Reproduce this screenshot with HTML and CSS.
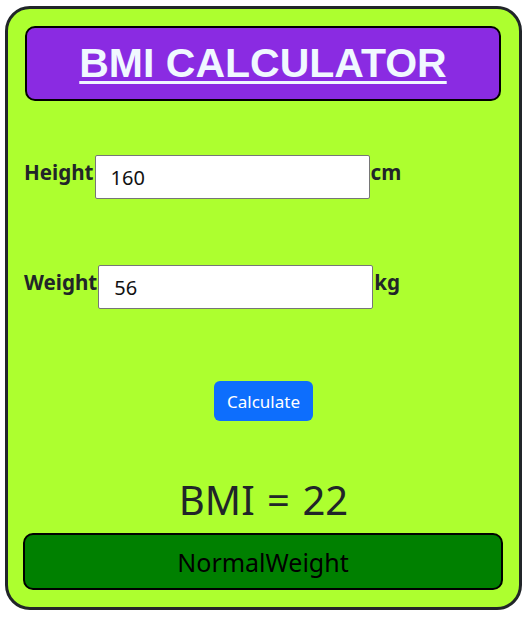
FILE: index.html
```html
<!DOCTYPE html>
<html lang="en">
<head>
<meta charset="utf-8">
<title>BMI Calculator</title>
<link rel="stylesheet" href="styles.css">
</head>
<body>
<div class="card">
  <div class="title-box">
    <h1 class="title">BMI CALCULATOR</h1>
  </div>
  <div class="field field-height">
    <label class="label" for="h">Height</label>
    <input class="input" id="h" type="text" value="160">
    <span class="unit">cm</span>
  </div>
  <div class="field field-weight">
    <label class="label" for="w">Weight</label>
    <input class="input" id="w" type="text" value="56">
    <span class="unit">kg</span>
  </div>
  <div class="actions">
    <button class="btn" type="button">Calculate</button>
  </div>
  <h2 class="bmi">BMI = 22</h2>
  <div class="result">NormalWeight</div>
</div>
</body>
</html>
```

FILE: styles.css
```css
* { box-sizing: border-box; }

body {
  margin: 0;
  background: #ffffff;
  font-family: "Noto Sans", "Open Sans", sans-serif;
  color: #212529;
}

.card {
  margin: 6px 0 0 5px;
  width: 517px;
  height: 604px;
  border: 3px solid #212529;
  border-radius: 25px;
  background: #adff2f;
  display: flex;
  flex-direction: column;
}

.title-box {
  margin: 17px 18px 0 17px;
  height: 75px;
  border: 2px solid #000;
  border-radius: 10px;
  background: #8a2be2;
  display: flex;
  align-items: center;
  justify-content: center;
}

.title {
  margin: 0;
  font-family: "Liberation Sans", Arial, sans-serif;
  font-weight: 700;
  font-size: 41px;
  color: #f0f8ff;
  text-decoration: underline;
  text-decoration-thickness: 3px;
  text-underline-offset: 4px;
}

.field {
  display: flex;
  align-items: flex-start;
  margin-left: 16px;
}

.field-height { margin-top: 54px; }
.field-weight { margin-top: 66px; }

.label,
.unit {
  font-size: 20.6px;
  font-weight: 700;
  line-height: 24px;
  padding-top: 5px;
  color: #212529;
}

.input {
  width: 275px;
  height: 44px;
  border: 1px solid #767676;
  border-radius: 2px;
  padding: 0 15px;
  font-family: "Noto Sans", "Open Sans", sans-serif;
  font-size: 20px;
  color: #111;
  background: #fff;
  margin: 0 1px 0 1px;
}

.actions {
  display: flex;
  justify-content: center;
  margin-top: 72px;
}

.btn {
  width: 99px;
  height: 40px;
  border: 0;
  border-radius: 6px;
  background: #0d6efd;
  color: #fff;
  font-family: "Noto Sans", "Open Sans", sans-serif;
  font-size: 17px;
  padding: 0;
}

.bmi {
  margin: 55px 0 0 0;
  text-align: center;
  font-size: 40px;
  font-weight: 400;
  line-height: 48px;
  word-spacing: 2px;
  color: #212529;
}

.result {
  margin: 9px 16px 0 15px;
  height: 57px;
  border: 2px solid #000;
  border-radius: 10px;
  background: #008000;
  color: #000;
  font-size: 25px;
  display: flex;
  align-items: center;
  justify-content: center;
}
```
